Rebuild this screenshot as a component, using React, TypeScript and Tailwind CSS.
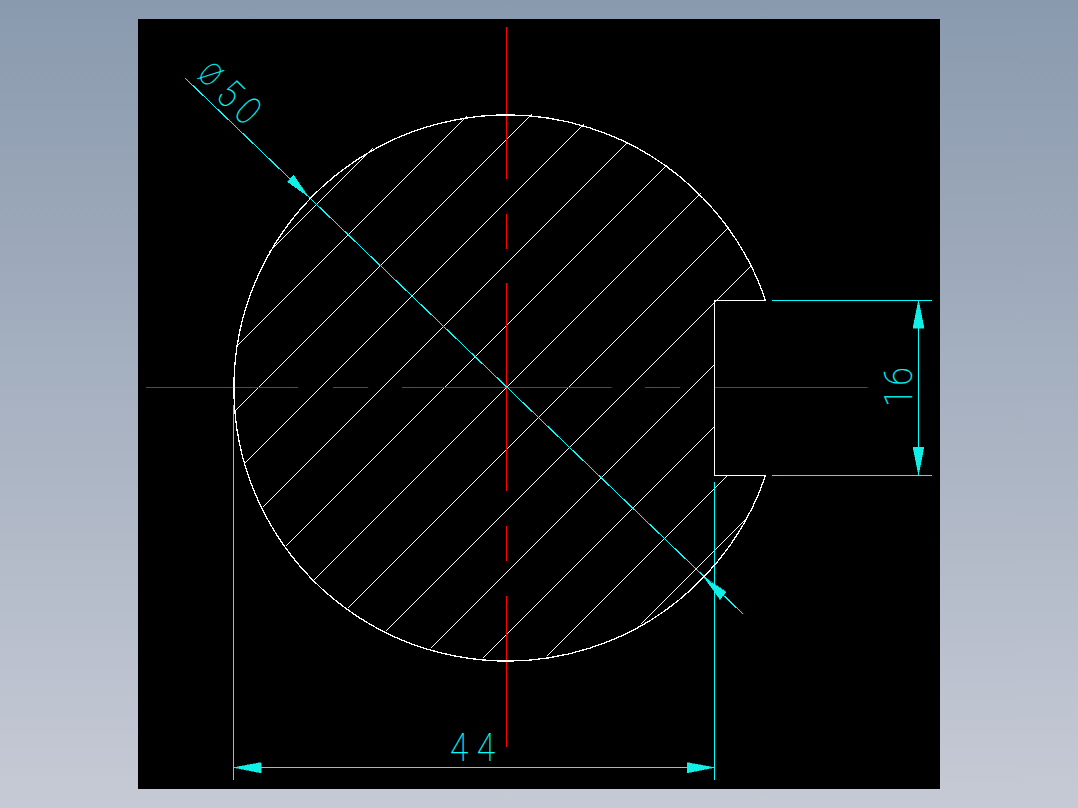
const HATCH = [521, 583, 646, 708, 770, 832, 894, 956, 1017, 1079, 1141, 1203, 1265];
const CX = 506;
const CY = 387;
const R = 273;

function hatchLine(c: number) {
  const d = (c - (CX + CY)) / 2;
  const half = Math.sqrt((R * R) / 2 - d * d);
  const x1 = Math.round(CX + d - half) + 0.5;
  let x2 = Math.round(CX + d + half) + 0.5;
  if (c === 1079 || c === 1141) x2 = 714.5;
  if (c === 1203) x2 = c - 475.5;
  return { x1, y1: c - x1, x2, y2: c - x2 };
}

const RED = [
  "M506.5 27V179",
  "M506.5 214V249",
  "M506.5 283V491",
  "M506.5 526V561",
  "M506.5 596V747",
  "M146 387.5H298",
  "M333 387.5H368",
  "M402 387.5H611",
  "M645 387.5H680",
  "M715 387.5H867",
];

const CYAN = [
  "M185 78L743 614",
  "M233.5 405V780",
  "M714.5 482V780",
  "M233 767.5H714",
  "M772 300.5H932",
  "M772 475.5H932",
  "M918.5 300V475",
];

const ARROWS = [
  "308.5,197 287.5,182 293.5,175",
  "704.5,578 720,599.5 726,592",
  "234,767.5 261,762.5 261,773",
  "714,767.5 687,762.5 687,773",
  "918.5,300 913,328 924,328",
  "918.5,475 913,447 924,447",
];

const textFont = "Roboto, Inter, 'Liberation Sans', sans-serif";

export default function App() {
  return (
    <div className="flex h-[808px] w-[1078px] items-start bg-gradient-to-b from-[#8a9aae] to-[#c6cad5] pl-[138px] pt-[19px]">
      <div className="h-[770px] w-[802px] bg-black">
        <svg viewBox="138 19 802 770" width="802" height="770" className="block" fill="none">
          <g stroke="#ffffff" strokeWidth="1" shapeRendering="crispEdges">
            {HATCH.map((c) => {
              const l = hatchLine(c);
              return <line key={c} x1={l.x1} y1={l.y1} x2={l.x2} y2={l.y2} />;
            })}
          </g>
          <g stroke="#ff0000" strokeWidth="1" shapeRendering="crispEdges">
            {RED.map((d) => (
              <path key={d} d={d} />
            ))}
          </g>
          <g stroke="#00ffff" strokeWidth="1" shapeRendering="crispEdges">
            {CYAN.map((d) => (
              <path key={d} d={d} />
            ))}
          </g>
          <g fill="#10f0e6" stroke="#10f0e6" strokeWidth="0.5" shapeRendering="crispEdges">
            {ARROWS.map((p) => (
              <polygon key={p} points={p} />
            ))}
          </g>
          <g stroke="#ffffff" strokeWidth="1.3" shapeRendering="crispEdges">
            <path d="M765.5 300.5A273 273 0 1 0 765.5 475.5" />
            <path d="M765.5 300.5H714.5V475.5H765.5" />
          </g>
          <g
            fill="#00ffff"
            stroke="#00ffff"
            strokeWidth="0.2"
            fontFamily={textFont}
            fontWeight="100"
            fontSize="39"
          >
            <text transform="translate(450 761) scale(0.85 1)" letterSpacing="10">
              44
            </text>
            <text transform="translate(912 407) rotate(-90) scale(0.85 1)" letterSpacing="4">
              16
            </text>
            <text transform="translate(194.6 77.8) rotate(44) scale(0.85 1)">
              <tspan fontSize="32" dy="-2.5" letterSpacing="11">
                Ø
              </tspan>
              <tspan dy="2.5" letterSpacing="8">
                50
              </tspan>
            </text>
          </g>
        </svg>
      </div>
    </div>
  );
}
